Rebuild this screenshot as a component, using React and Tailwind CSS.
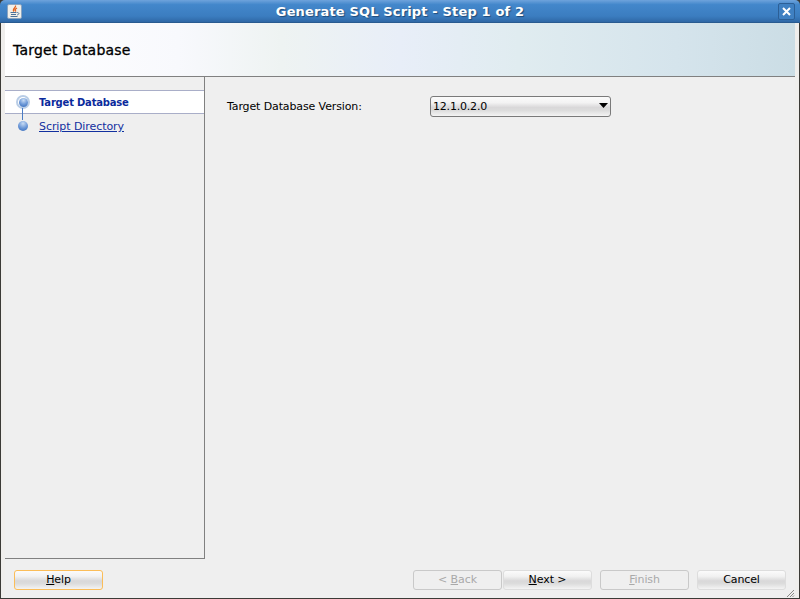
import React from 'react';

const buttonGloss = 'bg-[linear-gradient(to_bottom,#fbfbfb_0%,#f1f1f1_30%,#d9d8d9_55%,#dcdcdc_70%,#f4f4f4_100%)]';

const JavaIcon = () => (
  <svg className="w-[15px] h-[15px]" viewBox="0 0 15 15">
    <rect x="0.5" y="0.5" width="14" height="14" rx="1.5" fill="#f1efe9" stroke="#8aa4c0" />
    <path d="M8.500 1.500c1 2-4 3.500-1.500 6M10 4c-2 1-2.500 2-1 3.500" fill="none" stroke="#e2611c" strokeWidth="1.300" />
    <path d="M3.500 8.500h6M4 10.500h5M3.500 12.500h7" stroke="#4c7199" strokeWidth="1" />
    <path d="M10 8.500c2.500 0 2.500 2 0 2.500" fill="none" stroke="#4c7199" strokeWidth="0.900" />
  </svg>
);

const Bullet = ({ selected }) => (
  <span className="relative flex items-center justify-center w-[14px] h-[14px]">
    {selected && <span className="absolute inset-0 rounded-full border-2 border-[#b9cde6] bg-white" />}
    <span className={`relative rounded-full bg-[radial-gradient(circle_at_50%_25%,#c8dcf4_0%,#6f9ad8_50%,#2f66b8_100%)] ${selected ? 'w-[9px] h-[9px]' : 'w-[10px] h-[10px]'}`} />
  </span>
);

const WizardButton = ({ label, hot, rest, disabled, focused }) => {
  if (disabled) {
    return (
      <button className="w-[89px] h-[20px] rounded-[3px] border border-[#c9c9c9] bg-[#efefef] text-[#a9a9a9] text-[11px] tracking-[-0.1px]">
        {label}<span className="underline">{hot}</span>{rest}
      </button>
    );
  }
  return (
    <button className={`w-[89px] h-[20px] rounded-[3px] border text-[11px] tracking-[-0.1px] text-black ${buttonGloss} ${focused ? 'border-[#fbbd58]' : 'border-[#dddddd]'}`}>
      {label}<span className="underline">{hot}</span>{rest}
    </button>
  );
};

export default function App() {
  return (
    <div className="w-[800px] h-[599px] flex flex-col overflow-hidden bg-[#3b3a36] font-['DejaVu_Sans',sans-serif]">
      {/* Window title bar */}
      <div className="h-[23px] shrink-0 flex items-center px-[7px] rounded-t-[5px] bg-[linear-gradient(to_bottom,#6ea3dc_0%,#4387cb_20%,#3b7dc0_70%,#2f68a6_95%,#24507f_100%)]">
        <JavaIcon />
        <div className="flex-1 text-center text-white font-bold text-[13px] tracking-[0.15px] [text-shadow:1px_1px_1px_#1f4a78]">
          Generate SQL Script - Step 1 of 2
        </div>
        <div className="w-[17px] h-[17px] -mr-[2px] flex items-center justify-center rounded-[2px] border border-[#2c5f96] bg-[#3f80c2]">
          <svg className="w-[9px] h-[9px]" viewBox="0 0 9 9">
            <path d="M1 1l7 7M8 1l-7 7" stroke="#ffffff" strokeWidth="2" />
          </svg>
        </div>
      </div>

      {/* Window body */}
      <div className="flex-1 min-h-0 ml-px mr-px mb-px flex flex-col bg-[#efeeec] pl-[4px] pr-[4px]">
        <div className="flex-1 min-h-0 flex flex-col bg-[#efefef]">
          {/* Banner */}
          <div className="h-[54px] shrink-0 flex items-center pl-[8px] pt-[2px] border-b border-[#808080] bg-[linear-gradient(to_right,#ffffff_0%,#f8f9fd_22%,#eef3f2_35%,#e8eef8_50%,#e0ecf0_65%,#d5e4ec_85%,#cbdde5_100%)]">
            <span className="text-[14px] font-medium tracking-[0.2px] text-black [-webkit-text-stroke:0.3px_black]">Target Database</span>
          </div>

          <div className="flex-1 min-h-0 flex">
            {/* Steps */}
            <div className="w-[200px] shrink-0 h-[482px] pt-[13px] border-r border-b border-[#808080]">
              <div className="relative">
                <div className="h-[24px] flex items-center gap-[9px] pl-[11px] bg-white border-y border-[#a9aec8]">
                  <Bullet selected />
                  <span className="pt-px text-[10px] font-bold tracking-[-0.2px] text-[#0b2a9c]">Target Database</span>
                </div>
                <div className="h-[24px] flex items-center gap-[9px] pl-[11px]">
                  <Bullet />
                  <span className="pt-[3px] text-[11px] tracking-[-0.07px] text-[#12309f] underline">Script Directory</span>
                </div>
                <div className="absolute left-[17px] top-[18px] w-px h-[12px] bg-[#4a7cc4]" />
              </div>
            </div>

            {/* Step content */}
            <div className="flex-1 flex items-start pl-[22px] pt-[19px]">
              <span className="w-[203px] h-[20px] mt-px leading-[20px] text-[11px] tracking-[-0.12px] text-black">Target Database Version:</span>
              <div className="w-[181px] h-[21px] flex items-center justify-between pl-[2px] pr-[2px] rounded-[3px] border border-[#7a7a7a] bg-[linear-gradient(to_bottom,#fbfbfb_0%,#f3f3f3_30%,#d9d8d9_55%,#dcdcdc_70%,#f4f4f4_100%)]">
                <span className="pt-[2px] text-[11px] tracking-[-0.2px] text-black">12.1.0.2.0</span>
                <svg className="w-[9px] h-[5px] -mt-[2px]" viewBox="0 0 9 5">
                  <path d="M0 0h9L4.500 5z" fill="#000000" />
                </svg>
              </div>
            </div>
          </div>

          {/* Footer buttons */}
          <div className="relative h-[39px] shrink-0 flex items-start pt-[11px] pl-[9px] pr-[9px]">
            <WizardButton label="" hot="H" rest="elp" focused />
            <div className="flex-1" />
            <WizardButton label="< " hot="B" rest="ack" disabled />
            <div className="w-[1px]" />
            <WizardButton label="" hot="N" rest="ext >" />
            <div className="w-[8px]" />
            <WizardButton label="" hot="F" rest="inish" disabled />
            <div className="w-[8px]" />
            <WizardButton label="Cancel" />
            <svg className="absolute right-0 bottom-0 w-[11px] h-[11px]" viewBox="0 0 11 11">
              <path d="M10 3l-7 7M10 6l-4 4M10 8.500l-1.500 1.500" stroke="#8a8a86" strokeWidth="1" />
            </svg>
          </div>
        </div>
      </div>
    </div>
  );
}
